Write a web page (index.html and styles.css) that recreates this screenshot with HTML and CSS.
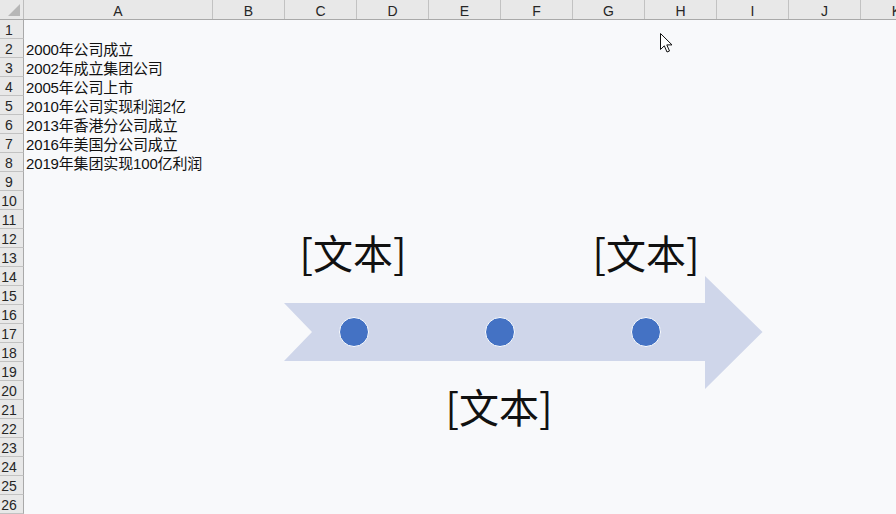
FILE: index.html
```html
<!DOCTYPE html>
<html lang="zh-CN">
<head>
  <meta charset="UTF-8" />
  <title>公司发展时间轴</title>
  <link rel="stylesheet" href="styles.css">
</head>
<body>
  <div class="sheet">
    <div class="col-heads">
      <div class="corner"><span class="corner-mark"></span></div>
      <div class="col-head col-a">A</div>
      <div class="col-head">B</div>
      <div class="col-head">C</div>
      <div class="col-head">D</div>
      <div class="col-head">E</div>
      <div class="col-head">F</div>
      <div class="col-head">G</div>
      <div class="col-head">H</div>
      <div class="col-head">I</div>
      <div class="col-head">J</div>
      <div class="col-head">K</div>
    </div>

    <div class="rows">
      <div class="row"><div class="row-head">1</div><div class="cell"></div></div>
      <div class="row"><div class="row-head">2</div><div class="cell">2000年公司成立</div></div>
      <div class="row"><div class="row-head">3</div><div class="cell">2002年成立集团公司</div></div>
      <div class="row"><div class="row-head">4</div><div class="cell">2005年公司上市</div></div>
      <div class="row"><div class="row-head">5</div><div class="cell">2010年公司实现利润2亿</div></div>
      <div class="row"><div class="row-head">6</div><div class="cell">2013年香港分公司成立</div></div>
      <div class="row"><div class="row-head">7</div><div class="cell">2016年美国分公司成立</div></div>
      <div class="row"><div class="row-head">8</div><div class="cell">2019年集团实现100亿利润</div></div>
      <div class="row"><div class="row-head">9</div><div class="cell"></div></div>
      <div class="row"><div class="row-head">10</div><div class="cell"></div></div>
      <div class="row"><div class="row-head">11</div><div class="cell"></div></div>
      <div class="row"><div class="row-head">12</div><div class="cell"></div></div>
      <div class="row"><div class="row-head">13</div><div class="cell"></div></div>
      <div class="row"><div class="row-head">14</div><div class="cell"></div></div>
      <div class="row"><div class="row-head">15</div><div class="cell"></div></div>
      <div class="row"><div class="row-head">16</div><div class="cell"></div></div>
      <div class="row"><div class="row-head">17</div><div class="cell"></div></div>
      <div class="row"><div class="row-head">18</div><div class="cell"></div></div>
      <div class="row"><div class="row-head">19</div><div class="cell"></div></div>
      <div class="row"><div class="row-head">20</div><div class="cell"></div></div>
      <div class="row"><div class="row-head">21</div><div class="cell"></div></div>
      <div class="row"><div class="row-head">22</div><div class="cell"></div></div>
      <div class="row"><div class="row-head">23</div><div class="cell"></div></div>
      <div class="row"><div class="row-head">24</div><div class="cell"></div></div>
      <div class="row"><div class="row-head">25</div><div class="cell"></div></div>
      <div class="row"><div class="row-head">26</div><div class="cell"></div></div>
    </div>

    <!-- 浮动在单元格上方的时间轴图形 -->
    <div class="drawing">
      <svg class="timeline" width="896" height="514" viewBox="0 0 896 514">
        <polygon class="arrow" points="284,303 705,303 705,276 762.5,332 705,389 705,361 284,361 312,332" />
        <circle class="dot" cx="354" cy="332" r="14.5" />
        <circle class="dot" cx="500" cy="332" r="14.5" />
        <circle class="dot" cx="646" cy="332" r="14.5" />
      </svg>
      <div class="label label-1">[文本]</div>
      <div class="label label-2">[文本]</div>
      <div class="label label-3">[文本]</div>
    </div>

    <svg class="cursor" width="14" height="21" viewBox="0 0 14 21">
      <polygon points="0.5,0.5 0.5,16.5 4.3,12.8 7,19 9.5,18 6.8,11.9 12,11.9" />
    </svg>
  </div>
</body>
</html>
```

FILE: styles.css
```css
* { box-sizing: border-box; }
body { margin: 0; background: #f8f9fb; }

.sheet {
  position: relative;
  width: 896px;
  height: 514px;
  overflow: hidden;
  font-family: "Liberation Sans", "Noto Sans CJK SC", sans-serif;
}

/* 列标题 */
.col-heads {
  display: flex;
  height: 20px;
  background: #e8e8e8;
  border-bottom: 1px solid #a9a9a9;
}
.corner {
  position: relative;
  flex: 0 0 24px;
  border-right: 1px solid #bdbdbd;
}
.corner-mark {
  position: absolute;
  right: 3px;
  bottom: 3px;
  width: 0;
  height: 0;
  border-left: 12px solid transparent;
  border-bottom: 12px solid #b7b7b7;
}
.col-head {
  flex: 0 0 72px;
  border-right: 1px solid #c2c2c2;
  text-align: center;
  font-size: 14px;
  line-height: 22px;
  color: #262626;
}
.col-head.col-a { flex-basis: 189px; }

/* 行标题和单元格 */
.rows { display: flex; flex-direction: column; }
.row { display: flex; height: 19px; }
.row-head {
  flex: 0 0 24px;
  background: #e8e8e8;
  border-right: 1px solid #a9a9a9;
  border-bottom: 1px solid #c2c2c2;
  padding-right: 5px;
  text-align: center;
  font-size: 14px;
  line-height: 20px;
  color: #262626;
}
.cell {
  padding-left: 2px;
  font-size: 15px;
  line-height: 21px;
  letter-spacing: -0.15px;
  color: #111;
  white-space: nowrap;
}

/* 图形 */
.drawing {
  position: absolute;
  left: 0;
  top: 0;
  width: 896px;
  height: 514px;
}
.timeline { display: block; }
.arrow { fill: #cfd6ea; }
.dot { fill: #4472c4; stroke: #ffffff; stroke-width: 1; }

.label {
  position: absolute;
  width: 140px;
  margin-left: -70px;
  text-align: center;
  font-family: "Noto Sans CJK SC", sans-serif;
  font-size: 40px;
  line-height: 40px;
  color: #111;
  white-space: nowrap;
}
.label-1 { left: 353px; top: 232px; }
.label-2 { left: 499px; top: 386px; }
.label-3 { left: 646px; top: 232px; }

.cursor {
  position: absolute;
  left: 660px;
  top: 33px;
}
.cursor polygon { fill: #ffffff; stroke: #111; stroke-width: 1; }
```
